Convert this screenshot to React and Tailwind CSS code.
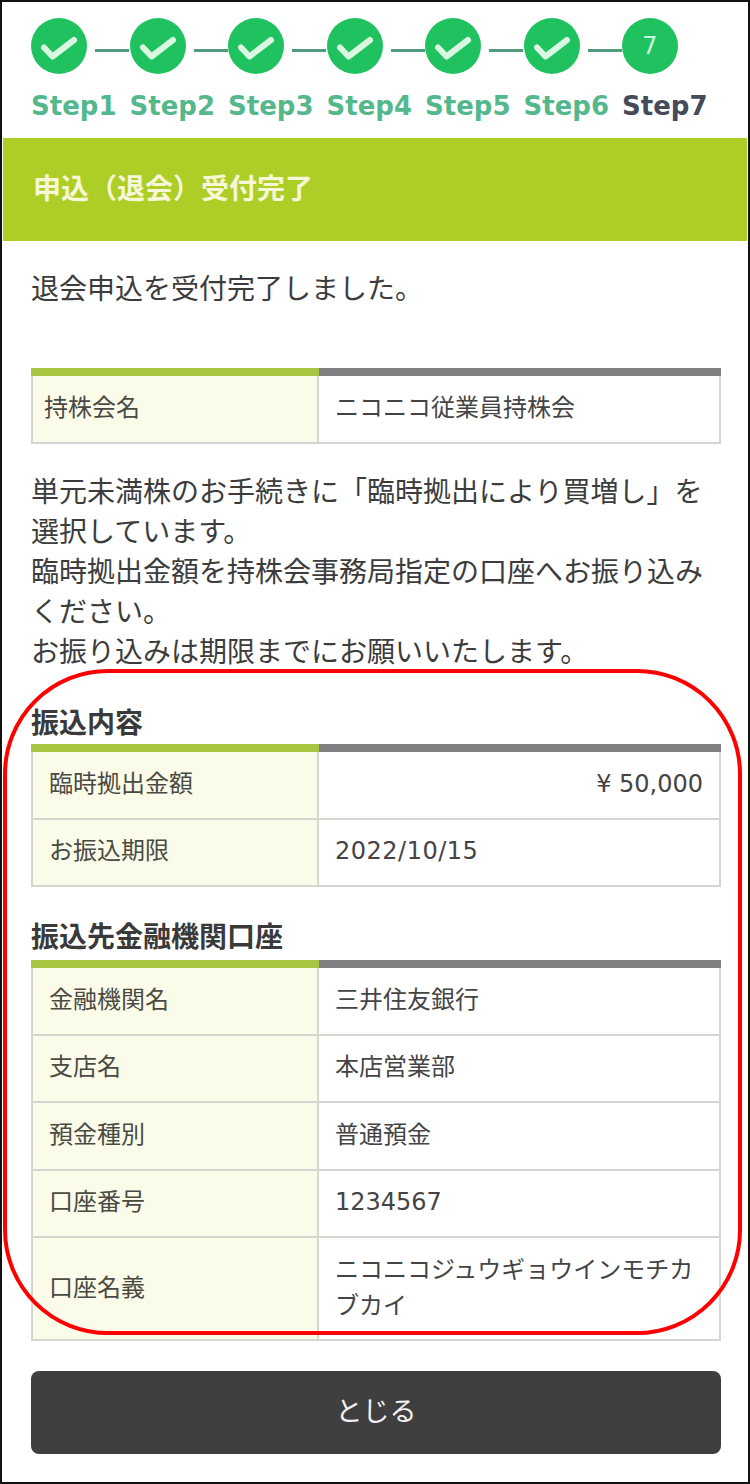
const steps = [1, 2, 3, 4, 5, 6, 7]

const fontStack = "font-['DejaVu_Sans','Noto_Sans_CJK_JP',sans-serif]"

const StepCircle = ({ n, done }) => (
    <div className="w-14 h-14 rounded-full bg-[#1fc25e] flex items-center justify-center shrink-0">
        {done ? (
            <svg width="56" height="56" viewBox="0 0 56 56" fill="none">
                <path d="M13 29.5l8.5 9L43 22" stroke="#d8f8e2" strokeWidth="6" strokeLinecap="round" strokeLinejoin="round" />
            </svg>
        ) : (
            <span className="text-[24px] text-[#c9f5d8]">{n}</span>
        )}
    </div>
)

const InfoRow = ({ label, children, height = 'h-[67.5px]', labelPad = 'pl-[16px]', align = '' }) => (
    <div className={`flex ${height} border-x-2 border-b-2 border-[#d4d6d2]`}>
        <div className={`w-[286px] shrink-0 bg-[#fafce9] flex items-center ${labelPad} pb-[2px] text-[24px] text-[#4a4a44] border-r-2 border-[#d4d6d2]`}>
            {label}
        </div>
        <div className={`flex-1 flex items-center pl-[16px] pr-[16px] pb-[2px] text-[24px] leading-[36px] text-[#444] ${align}`}>
            <div>{children}</div>
        </div>
    </div>
)

const TopBar = () => (
    <div className="flex h-2">
        <div className="w-[288px] bg-[#a9c643]" />
        <div className="flex-1 bg-[#808080]" />
    </div>
)

const Heading = ({ children }) => (
    <h2 className="text-[28px] leading-[36px] font-bold text-[#3a3a3a]">{children}</h2>
)

export default function App() {
    return (
        <div className={`relative w-[750px] h-[1484px] border-2 border-[#111] bg-white overflow-hidden ${fontStack}`}>
            {/* steps */}
            <div className="pl-[29px] pt-[16px] h-[136px]">
                <div className="flex">
                    {steps.map((n) => (
                        <div key={n} className="flex items-center w-[98.5px] shrink-0">
                            <StepCircle n={n} done={n < 7} />
                            {n < 7 && <div className="w-[34px] h-[3px] ml-[8px] mt-2 bg-[#4f9b7c]" />}
                        </div>
                    ))}
                </div>
                <div className="flex mt-[14px]">
                    {steps.map((n) => (
                        <div
                            key={n}
                            className={`w-[98.5px] shrink-0 text-[26px] leading-[36px] font-semibold whitespace-nowrap ${n < 7 ? 'text-[#55b88c]' : 'text-[#454b58]'}`}
                        >
                            Step{n}
                        </div>
                    ))}
                </div>
            </div>

            <div className="mx-px h-[103px] bg-[#acce26] flex items-center pl-[30px] text-[28px] font-bold text-[#f7f7d8]">
                申込（退会）受付完了
            </div>

            <div className="pl-[29px] pr-[27px]">
                <p className="mt-[29px] text-[28px] leading-[40px] text-[#3c3c3c]">退会申込を受付完了しました。</p>

                <div className="mt-[58px]">
                    <TopBar />
                    <InfoRow label="持株会名" height="h-[68px]" labelPad="pl-[11px]">ニコニコ従業員持株会</InfoRow>
                </div>

                <p className="mt-[29px] text-[28px] leading-[40px] text-[#3c3c3c]">
                    単元未満株のお手続きに「臨時拠出により買増し」を
                    <br />
                    選択しています。
                    <br />
                    臨時拠出金額を持株会事務局指定の口座へお振り込み
                    <br />
                    ください。
                    <br />
                    お振り込みは期限までにお願いいたします。
                </p>

                <div className="mt-[33px]">
                    <Heading>振込内容</Heading>
                    <div className="mt-[2px]">
                        <TopBar />
                        <InfoRow label="臨時拠出金額" align="justify-end">¥ 50,000</InfoRow>
                        <InfoRow label="お振込期限"><span className="tracking-[0.5px]">2022/10/15</span></InfoRow>
                    </div>
                </div>

                <div className="mt-[33px]">
                    <Heading>振込先金融機関口座</Heading>
                    <div className="mt-[4px]">
                        <TopBar />
                        <InfoRow label="金融機関名">三井住友銀行</InfoRow>
                        <InfoRow label="支店名">本店営業部</InfoRow>
                        <InfoRow label="預金種別">普通預金</InfoRow>
                        <InfoRow label="口座番号">1234567</InfoRow>
                        <InfoRow label="口座名義" height="h-[103px]">ニコニコジュウギョウインモチカブカイ</InfoRow>
                    </div>
                </div>

                <button className="mt-[30px] w-full h-[83px] rounded-lg bg-[#3f3f3f] text-[27px] text-[#f2f2f2]">とじる</button>
            </div>

            {/* red annotation drawn over the screenshot */}
            <div className="absolute left-[1px] top-[667px] w-[739px] h-[666px] border-4 border-[#f00] rounded-[105px] pointer-events-none" />
        </div>
    )
}
